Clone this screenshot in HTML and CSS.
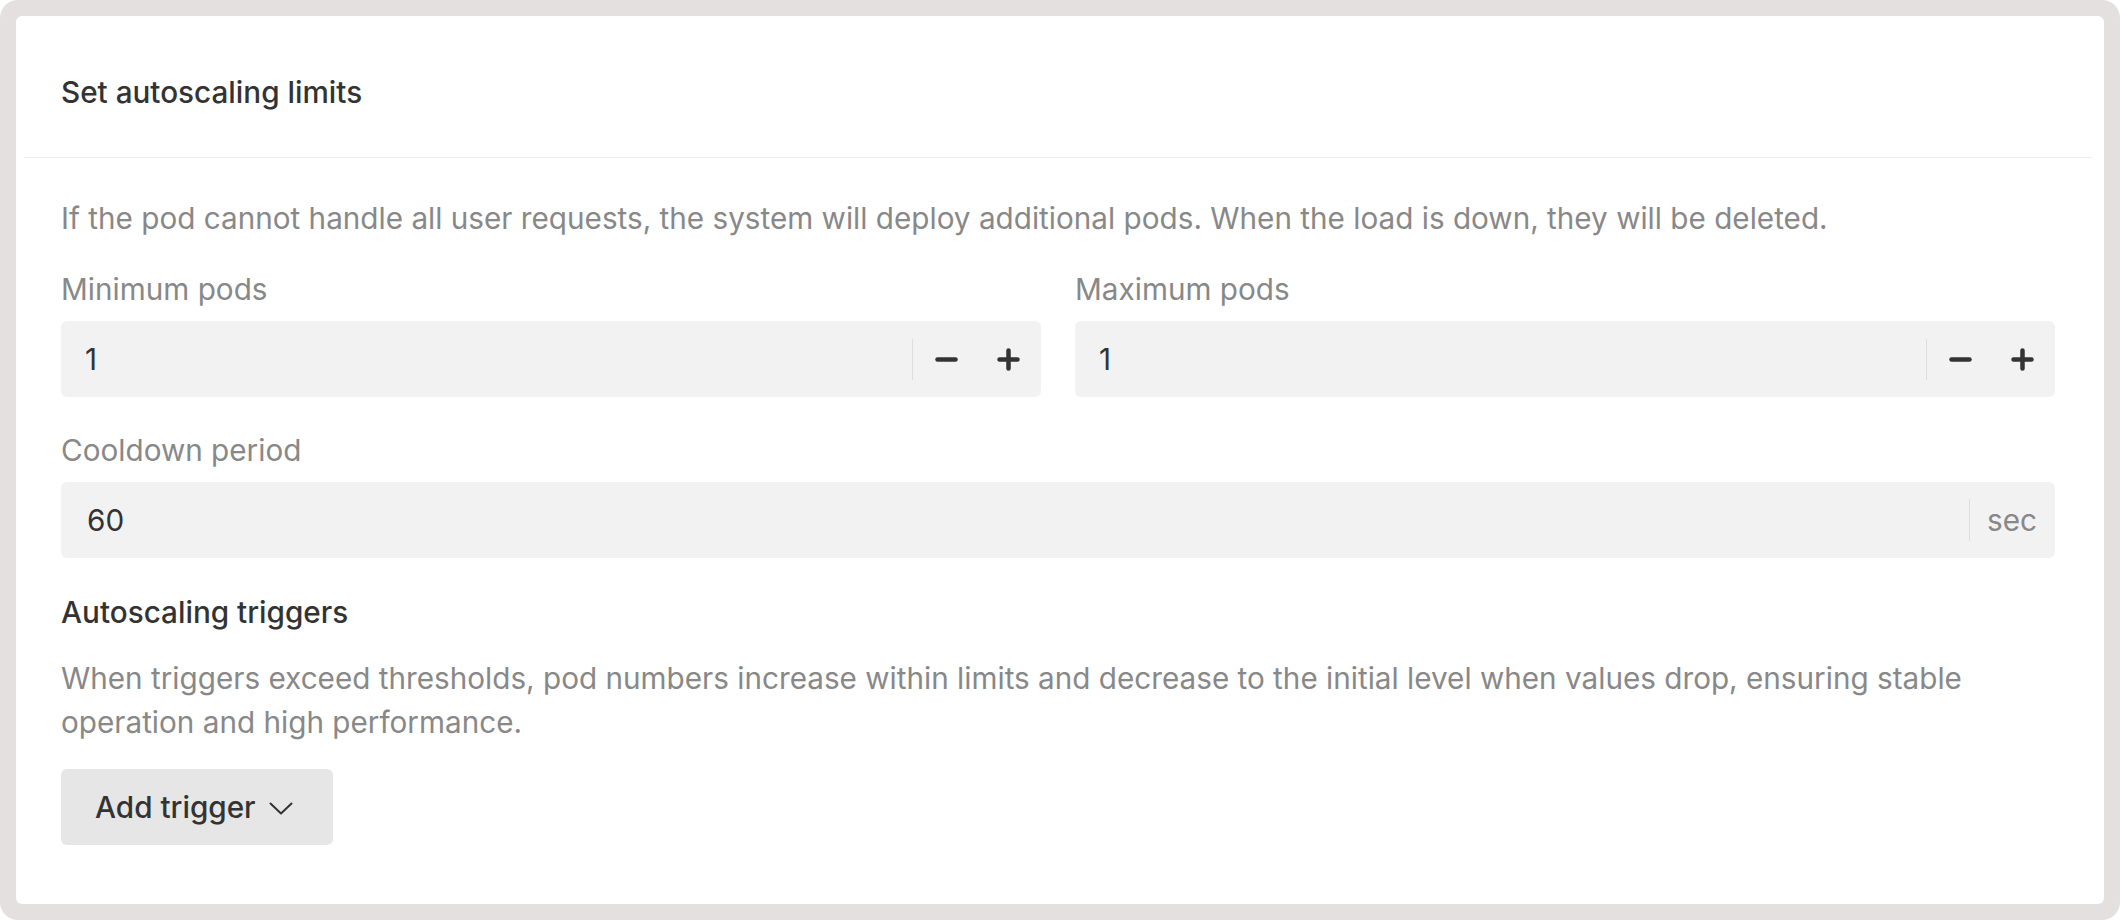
FILE: index.html
```html
<!DOCTYPE html>
<html lang="en">
<head>
<meta charset="utf-8">
<title>Set autoscaling limits</title>
<link rel="stylesheet" href="styles.css">
</head>
<body>
<div class="frame">
  <section class="card">
    <header class="card-header">
      <h2 class="card-title">Set autoscaling limits</h2>
    </header>
    <div class="divider"></div>
    <div class="card-body">
      <p class="hint">If the pod cannot handle all user requests, the system will deploy additional pods. When the load is down, they will be deleted.</p>
      <div class="row">
        <div class="field">
          <label class="label">Minimum pods</label>
          <div class="input">
            <span class="value">1</span>
            <span class="sep"></span>
            <span class="step">
              <svg width="23" height="23" viewBox="0 0 23 23"><path d="M2.5 11.5h18" stroke="#333" stroke-width="4.5" stroke-linecap="round"/></svg>
            </span>
            <span class="step">
              <svg width="23" height="23" viewBox="0 0 23 23"><path d="M2.5 11.5h18M11.5 2.5v18" stroke="#333" stroke-width="4.5" stroke-linecap="round"/></svg>
            </span>
          </div>
        </div>
        <div class="field">
          <label class="label">Maximum pods</label>
          <div class="input">
            <span class="value">1</span>
            <span class="sep"></span>
            <span class="step">
              <svg width="23" height="23" viewBox="0 0 23 23"><path d="M2.5 11.5h18" stroke="#333" stroke-width="4.5" stroke-linecap="round"/></svg>
            </span>
            <span class="step">
              <svg width="23" height="23" viewBox="0 0 23 23"><path d="M2.5 11.5h18M11.5 2.5v18" stroke="#333" stroke-width="4.5" stroke-linecap="round"/></svg>
            </span>
          </div>
        </div>
      </div>
      <div class="field field-full">
        <label class="label">Cooldown period</label>
        <div class="input">
          <span class="value value-num">60</span>
          <span class="sep sep-unit"></span>
          <span class="unit">sec</span>
        </div>
      </div>
      <h3 class="subtitle">Autoscaling triggers</h3>
      <p class="hint hint-2">When triggers exceed thresholds, pod numbers increase within limits and decrease to the initial level when values drop, ensuring stable operation and high performance.</p>
      <button class="btn" type="button">Add trigger
        <svg class="chev" width="24" height="13" viewBox="0 0 24 13"><path d="M1.5 1.5l10.5 10 10.5-10" fill="none" stroke="#333" stroke-width="2" stroke-linecap="round" stroke-linejoin="round"/></svg>
      </button>
    </div>
  </section>
</div>
</body>
</html>
```
FILE: styles.css
```css
* { box-sizing: border-box; }
html, body { margin: 0; padding: 0; background: #ffffff; }
body {
  font-family: Inter, "Noto Sans", "Liberation Sans", sans-serif;
  font-size: 29.7px;
  color: #333333;
}
.frame {
  width: 2120px;
  height: 920px;
  background: #e3e0df;
  border-radius: 18px;
  padding: 16px;
}
.card {
  background: #ffffff;
  border-radius: 6px;
  height: 100%;
  display: flex;
  flex-direction: column;
}
.card-header {
  height: 141px;
  padding: 10px 46px 0 45px;
  display: flex;
  align-items: center;
}
.card-title {
  margin: 0;
  font-size: 29.7px;
  font-weight: 500;
  line-height: 36px;
  color: #333333;
}
.divider {
  margin: 0 12px 0 8px;
  height: 1px;
  background: #eeeeee;
}
.card-body {
  padding: 38px 49px 0 45px;
  display: flex;
  flex-direction: column;
  align-items: flex-start;
}
.hint {
  margin: 0;
  color: #888888;
  line-height: 44px;
}
.row {
  width: 100%;
  display: flex;
  gap: 34px;
  margin-top: 31px;
}
.field { flex: 1; display: flex; flex-direction: column; }
.field-full { width: 100%; margin-top: 35px; }
.label {
  color: #888888;
  line-height: 36px;
  margin-bottom: 14px;
}
.input {
  height: 76px;
  background: #f2f2f2;
  border-radius: 6px;
  display: flex;
  align-items: center;
  padding: 0 21px 0 24px;
}
.value { flex: 1; color: #333333; }
.value-num { padding-left: 2px; }
.sep {
  width: 1px;
  height: 41px;
  background: #dddddd;
  margin-right: 22px;
}
.step { display: flex; width: 23px; height: 23px; }
.step + .step { margin-left: 39px; }
.sep-unit { height: 42px; margin-right: 17px; }
.unit { color: #888888; margin-right: -3px; }
.subtitle {
  margin: 36px 0 0;
  font-size: 29.7px;
  font-weight: 500;
  line-height: 36px;
  color: #333333;
}
.hint-2 { margin-top: 26px; }
.btn {
  margin-top: 25px;
  height: 76px;
  width: 272px;
  border: 0;
  border-radius: 6px;
  background: #e6e6e6;
  font-family: inherit;
  font-size: 29.7px;
  font-weight: 500;
  color: #333333;
  display: flex;
  align-items: center;
  padding: 0 0 0 34px;
  gap: 13px;
}
.chev { margin-top: 2px; }
```
